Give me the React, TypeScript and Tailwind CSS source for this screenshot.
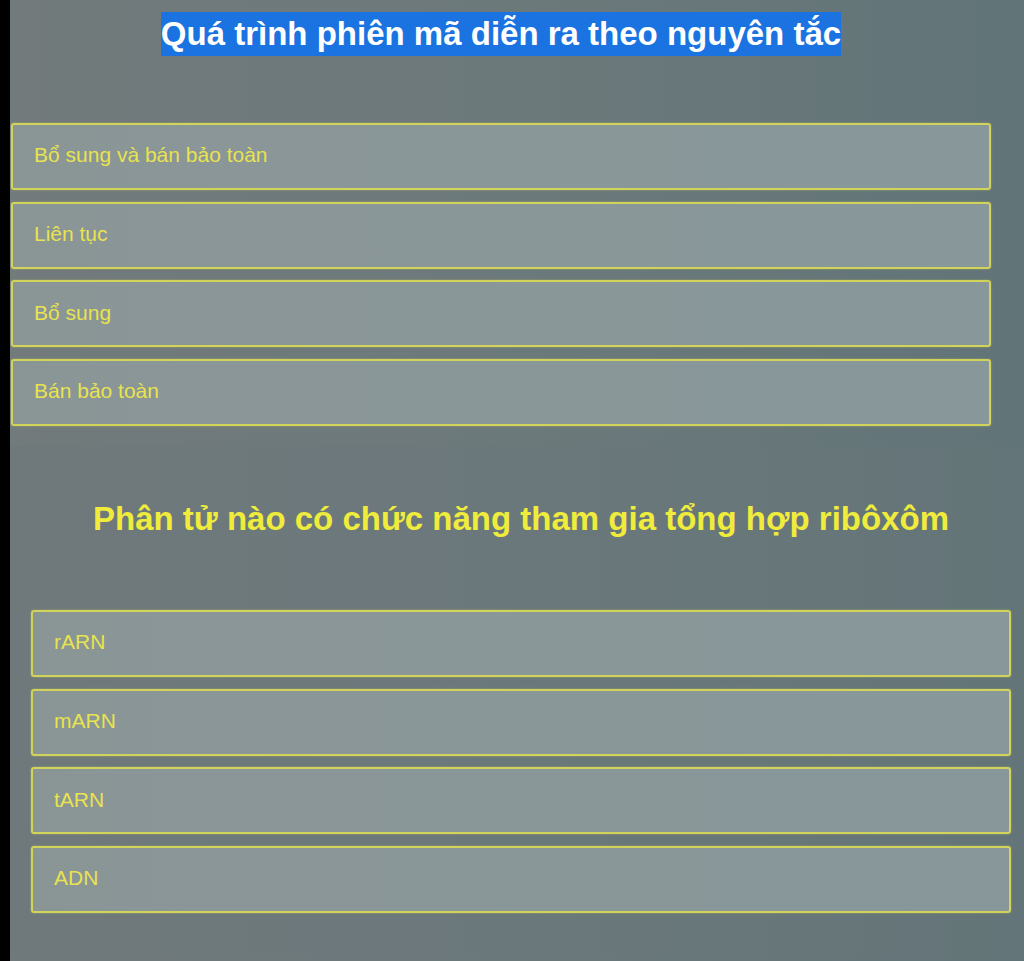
const first = ["Bổ sung và bán bảo toàn", "Liên tục", "Bổ sung", "Bán bảo toàn"];
const second = ["rARN", "mARN", "tARN", "ADN"];

function Option({ text }: { text: string }) {
  return (
    <div className="h-[67px] flex items-center px-[21px] pb-[3px] bg-gradient-to-r from-[#8a9596] via-[#8a9799] to-[#87979a] border-2 border-[#d2d35a] rounded-[3px] shadow-[0_0_2px_rgba(230,230,80,0.5)]">
      <span className="text-[21px] text-[#e8e34e]">{text}</span>
    </div>
  );
}

export default function App() {
  return (
    <div
      className="flex min-h-[961px] bg-gradient-to-r from-[#727a7b] via-[#6c797b] to-[#617478]"
      style={{ fontFamily: '"Liberation Sans", Arial, sans-serif' }}
    >
      <div className="w-[10px] bg-black shrink-0" />
      <div className="flex-1 flex flex-col">
        <section className="pl-[1px] pr-[33px] pt-[13px] pb-[20px]">
          <h2 className="text-center text-[33px] leading-[42px] font-bold text-white">
            <span className="bg-[#1a73e0] pt-[3px] pb-[4px]">Quá trình phiên mã diễn ra theo nguyên tắc</span>
          </h2>
          <div className="mt-[68px] flex flex-col gap-[11.67px]">
            {first.map((t) => (
              <Option key={t} text={t} />
            ))}
          </div>
        </section>
        <section className="pl-[21px] pr-[13px] pt-[52px] pb-[46px] bg-[#6b787a]/30">
          <h2 className="text-center text-[33px] leading-[42px] font-bold text-[#f0ec3c]">
            Phân tử nào có chức năng tham gia tổng hợp ribôxôm
          </h2>
          <div className="mt-[70px] flex flex-col gap-[11.67px]">
            {second.map((t) => (
              <Option key={t} text={t} />
            ))}
          </div>
        </section>
      </div>
    </div>
  );
}
